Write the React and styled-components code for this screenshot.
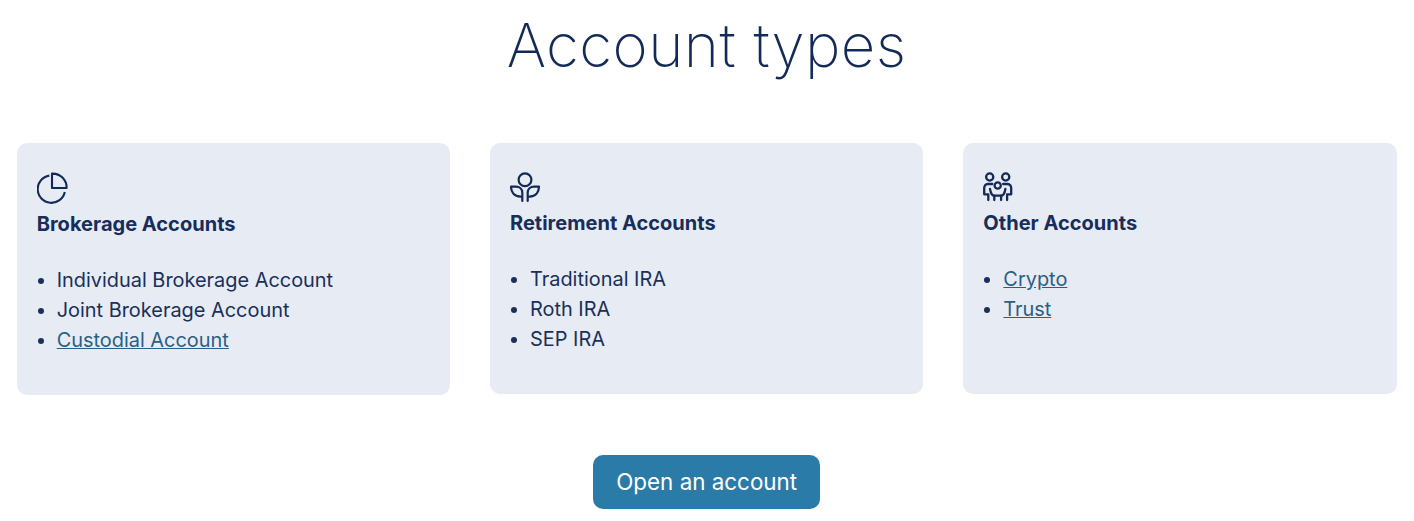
import React from 'react';
import styled, { createGlobalStyle } from 'styled-components';

const GlobalStyle = createGlobalStyle`
  html, body {
    margin: 0;
    padding: 0;
    background: #fff;
    font-family: 'Inter', 'Liberation Sans', sans-serif;
    color: #132a57;
  }
`;

const Page = styled.main`
  display: flex;
  flex-direction: column;
  align-items: center;
  padding: 0 17.3px 0 16.7px;
`;

const Title = styled.h1`
  margin: 0;
  height: 143px;
  padding-top: 9px;
  box-sizing: border-box;
  font-size: 60px;
  line-height: 72px;
  font-weight: 200;
  letter-spacing: 0.46px;
  color: #132a57;
`;

const Cards = styled.div`
  display: grid;
  grid-template-columns: repeat(3, 1fr);
  align-items: start;
  gap: 40px;
  width: 100%;
`;

const Card = styled.section`
  height: ${(p) => p.$height}px;
  box-sizing: border-box;
  padding: 29px 20px 0;
  background: #e7ebf4;
  border-radius: 10px;
`;

const IconSlot = styled.div`
  display: flex;
  height: ${(p) => p.$height}px;
`;

const CardTitle = styled.h3`
  margin: 0 0 26px;
  font-size: 20.05px;
  line-height: 30px;
  font-weight: 700;
  color: #172d5a;
`;

const List = styled.ul`
  margin: 0;
  padding: 0 0 0 20px;
  list-style: disc;
`;

const Item = styled.li`
  font-size: 19.92px;
  line-height: 30px;
  font-weight: 400;
  color: #1a3059;
`;

const ItemLink = styled.a`
  color: #2b5f85;
  text-decoration: underline;
`;

const OpenButton = styled.a`
  display: flex;
  align-items: center;
  justify-content: center;
  width: 227px;
  height: 54px;
  box-sizing: border-box;
  padding-bottom: 1px;
  margin-top: 60px;
  background: #2b7ba8;
  border-radius: 10px;
  color: #fff;
  font-size: 22.4px;
  font-weight: 400;
  text-decoration: none;
`;

const PieIcon = () => (
  <svg width="31" height="32" viewBox="0 0 31 32" fill="none" stroke="#132a57" strokeWidth="2.1">
    <path d="M12.3 3.6A13.7 13.7 0 1 0 27.8 20" />
    <path d="M15 1.6A14 14 0 0 1 29.6 16H15Z" strokeLinejoin="round" />
  </svg>
);

const PlantIcon = () => (
  <svg width="31" height="31" viewBox="0 0 31 31" fill="none" stroke="#132a57" strokeWidth="2.2" strokeLinecap="round" strokeLinejoin="round">
    <circle cx="15" cy="7.8" r="6.4" />
    <path d="M12.3 29V20.5C12.3 17 9.5 14.6 6 14.6H1C1 19.8 4 24.5 10.5 24.7" />
    <path d="M17.7 29V20.5C17.7 17 20.5 14.6 24 14.6H29C29 19.8 26 24.5 19.5 24.7" />
  </svg>
);

const PeopleIcon = () => (
  <svg width="30" height="30" viewBox="0 0 30 30" fill="none" stroke="#132a57" strokeWidth="2.3" strokeLinecap="round" strokeLinejoin="round">
    <circle cx="6.7" cy="5" r="3.6" />
    <circle cx="22.7" cy="5" r="3.6" />
    <circle cx="14.7" cy="13.5" r="3.1" />
    <path d="M5.3 28V22.3H1.2V16.3C1.2 13.8 2.5 12 4.8 12H9.3" />
    <path d="M24.1 28V22.3H28.2V16.3C28.2 13.8 26.9 12 24.6 12H20.1" />
    <path d="M7 17C7.6 20.5 9 23.7 11.3 23.7H18.1C20.4 23.7 21.8 20.5 22.4 17" />
    <path d="M11.3 23.7V28M18.1 23.7V28" />
  </svg>
);

const cards = [
  {
    title: 'Brokerage Accounts',
    icon: <PieIcon />,
    iconHeight: 37,
    height: 252,
    items: [
      { label: 'Individual Brokerage Account' },
      { label: 'Joint Brokerage Account' },
      { label: 'Custodial Account', link: true },
    ],
  },
  {
    title: 'Retirement Accounts',
    icon: <PlantIcon />,
    iconHeight: 36,
    height: 251,
    items: [{ label: 'Traditional IRA' }, { label: 'Roth IRA' }, { label: 'SEP IRA' }],
  },
  {
    title: 'Other Accounts',
    icon: <PeopleIcon />,
    iconHeight: 36,
    height: 251,
    items: [
      { label: 'Crypto', link: true },
      { label: 'Trust', link: true },
    ],
  },
];

export default function App() {
  return (
    <>
      <GlobalStyle />
      <Page>
        <Title>Account types</Title>
        <Cards>
          {cards.map((card) => (
            <Card key={card.title} $height={card.height}>
              <IconSlot $height={card.iconHeight}>{card.icon}</IconSlot>
              <CardTitle>{card.title}</CardTitle>
              <List>
                {card.items.map((item) => (
                  <Item key={item.label}>
                    {item.link ? <ItemLink href="#">{item.label}</ItemLink> : item.label}
                  </Item>
                ))}
              </List>
            </Card>
          ))}
        </Cards>
        <OpenButton href="#">Open an account</OpenButton>
      </Page>
    </>
  );
}
